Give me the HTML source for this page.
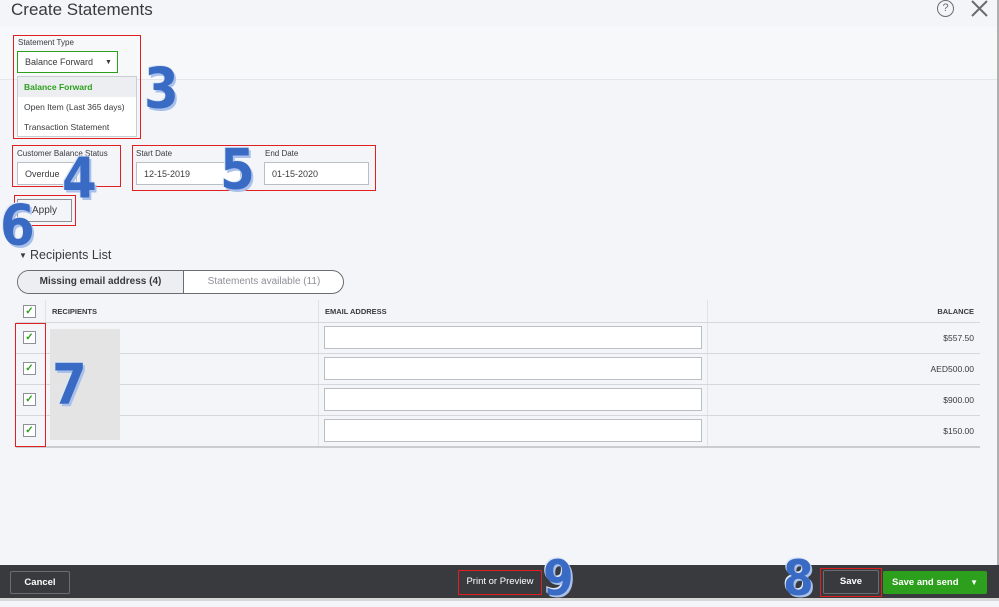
<!DOCTYPE html>
<html><head><meta charset="utf-8"><style>
*{box-sizing:border-box;margin:0;padding:0}
body{width:999px;height:601px;overflow:hidden;background:#f4f5f8;font-family:"Liberation Sans",sans-serif;color:#393a3d;position:relative}
.a{position:absolute}
.red{position:absolute;border:1px solid #e02020}
.inp{position:absolute;background:#fff;border:1px solid #babec5;font-size:9px;padding-left:7px;display:flex;align-items:center}
.lbl{position:absolute;font-size:8px;color:#393a3d}
.num{position:absolute;font-weight:bold;color:#3a6bc4;font-size:50px;font-family:"DejaVu Sans",sans-serif;text-shadow:2px 2px 0 #a9c1ea,-1px -1px 0 #dfe8f7;transform:scaleY(1.12);transform-origin:top left}
.cb{position:absolute;width:13px;height:13px;border:1px solid #8d9096;background:#fff;color:#2ca01c;font-size:10px;line-height:11px;text-align:center;font-weight:bold}
.hl{position:absolute;height:1px;background:#d4d7dc;left:16px;width:964px}
.em{position:absolute;left:324px;width:378px;height:23px;background:#fff;border:1px solid #babec5}
.bal{position:absolute;right:25px;font-size:8.5px;color:#393a3d}
</style></head><body>
<div class="a" style="left:0;top:0;width:999px;height:27px;background:#f4f5f8"></div>
<div class="a" style="left:0;top:27px;width:999px;height:53px;background:#f7f8fa;border-bottom:1px solid #e3e6ea"></div>
<div class="a" style="left:11px;top:0;font-size:17px;color:#393a3d">Create Statements</div>
<div class="a" style="left:937px;top:0;width:17px;height:17px;border:1.5px solid #6b6c72;border-radius:50%;font-size:11px;text-align:center;line-height:14px;color:#6b6c72">?</div>
<svg class="a" style="left:970px;top:0" width="19" height="18"><path d="M2 1L17 16M17 1L2 16" stroke="#6b6c72" stroke-width="2"/></svg>
<div class="a" style="left:997px;top:0;width:2px;height:601px;background:#b0b0b0"></div>

<div class="red" style="left:13px;top:35px;width:128px;height:104px"></div>
<div class="lbl" style="left:18px;top:38px">Statement Type</div>
<div class="inp" style="left:17px;top:51px;width:101px;height:22px;border:1px solid #2ca01c">Balance Forward<span style="margin-left:12px;font-size:7px">▼</span></div>
<div class="a" style="left:17px;top:76px;width:120px;height:61px;background:#fff;border:1px solid #c9ccd1"></div>
<div class="a" style="left:18px;top:77px;width:118px;height:20px;background:#eceef1"></div>
<div class="a" style="left:24px;top:82px;font-size:8.5px;color:#2ca01c;font-weight:bold">Balance Forward</div>
<div class="a" style="left:24px;top:102px;font-size:8.5px">Open Item (Last 365 days)</div>
<div class="a" style="left:24px;top:122px;font-size:8.5px">Transaction Statement</div>
<div class="num" style="left:144px;top:56px">3</div>

<div class="red" style="left:12px;top:145px;width:109px;height:42px"></div>
<div class="lbl" style="left:17px;top:149px">Customer Balance Status</div>
<div class="inp" style="left:17px;top:162px;width:60px;height:23px">Overdue</div>
<div class="num" style="left:62px;top:146px">4</div>

<div class="red" style="left:132px;top:145px;width:244px;height:46px"></div>
<div class="lbl" style="left:136px;top:149px">Start Date</div>
<div class="inp" style="left:136px;top:162px;width:105px;height:23px">12-15-2019</div>
<div class="lbl" style="left:265px;top:149px">End Date</div>
<div class="inp" style="left:264px;top:162px;width:105px;height:23px">01-15-2020</div>
<div class="num" style="left:220px;top:137px">5</div>

<div class="red" style="left:14px;top:195px;width:62px;height:31px"></div>
<div class="a" style="left:17px;top:199px;width:55px;height:23px;border:1px solid #8d9096;background:#f4f5f8;font-size:10px;text-align:center;line-height:21px">Apply</div>
<div class="num" style="left:0;top:193px">6</div>

<div class="a" style="left:19px;top:251px;font-size:8px">▼</div>
<div class="a" style="left:30px;top:248px;font-size:12.5px">Recipients List</div>
<div class="a" style="left:17px;top:270px;width:327px;height:24px;border:1.5px solid #6b6c72;border-radius:12px;background:#fff;overflow:hidden">
<div class="a" style="left:0;top:0;width:166px;height:22px;background:#eceef1;border-right:1.5px solid #6b6c72;font-size:10px;font-weight:bold;text-align:center;line-height:21px">Missing email address (4)</div>
<div class="a" style="left:166px;top:0;width:160px;height:22px;font-size:10px;color:#8d9096;text-align:center;line-height:21px">Statements available (11)</div>
</div>

<div class="a" style="left:45px;top:300px;width:1px;height:146px;background:#e0e2e6"></div>
<div class="a" style="left:318px;top:300px;width:1px;height:146px;background:#e0e2e6"></div>
<div class="a" style="left:707px;top:300px;width:1px;height:146px;background:#e0e2e6"></div>
<div class="cb" style="left:23px;top:305px">✓</div>
<div class="a" style="left:52px;top:307px;font-size:7.5px;font-weight:bold">RECIPIENTS</div>
<div class="a" style="left:325px;top:307px;font-size:7.5px;font-weight:bold">EMAIL ADDRESS</div>
<div class="a" style="right:25px;top:307px;font-size:7.5px;font-weight:bold">BALANCE</div>
<div class="hl" style="top:322px"></div>
<div class="hl" style="top:353px"></div>
<div class="hl" style="top:384px"></div>
<div class="hl" style="top:415px"></div>
<div class="hl" style="top:446px;height:2px;background:#c9ccd1"></div>
<div class="a" style="left:50px;top:329px;width:70px;height:111px;background:#e4e4e4"></div>
<div class="red" style="left:15px;top:323px;width:31px;height:124px"></div>
<div class="cb" style="left:23px;top:331px">✓</div>
<div class="cb" style="left:23px;top:362px">✓</div>
<div class="cb" style="left:23px;top:393px">✓</div>
<div class="cb" style="left:23px;top:424px">✓</div>
<div class="num" style="left:52px;top:352px">7</div>
<div class="em" style="top:326px"></div>
<div class="em" style="top:357px"></div>
<div class="em" style="top:388px"></div>
<div class="em" style="top:419px"></div>
<div class="bal" style="top:333px">$557.50</div>
<div class="bal" style="top:364px">AED500.00</div>
<div class="bal" style="top:395px">$900.00</div>
<div class="bal" style="top:426px">$150.00</div>

<div class="a" style="left:0;top:565px;width:999px;height:34px;background:#393a3d"></div>
<div class="a" style="left:0;top:598px;width:999px;height:3px;background:#d8d8d8"></div>
<div class="a" style="left:10px;top:571px;width:60px;height:23px;border:1px solid #6b6c72;border-radius:2px;color:#fff;font-size:9.5px;font-weight:bold;text-align:center;line-height:21px">Cancel</div>
<div class="red" style="left:458px;top:570px;width:84px;height:25px"></div>
<div class="a" style="left:458px;top:570px;width:84px;height:25px;color:#fff;font-size:9.5px;text-align:center;line-height:24px">Print or Preview</div>
<div class="num" style="left:543px;top:550px;font-size:44px">9</div>
<div class="num" style="left:783px;top:550px;font-size:44px">8</div>
<div class="red" style="left:820px;top:568px;width:62px;height:29px"></div>
<div class="a" style="left:823px;top:570px;width:56px;height:24px;border:1px solid #6b6c72;border-radius:2px;color:#fff;font-size:9.5px;font-weight:bold;text-align:center;line-height:22px">Save</div>
<div class="a" style="left:883px;top:571px;width:104px;height:23px;background:#2ca01c;border-radius:2px;color:#fff;font-size:9.5px;font-weight:bold;line-height:23px;padding-left:9px">Save and send<span style="position:absolute;right:9px;font-size:8px">▼</span></div>
</body></html>
